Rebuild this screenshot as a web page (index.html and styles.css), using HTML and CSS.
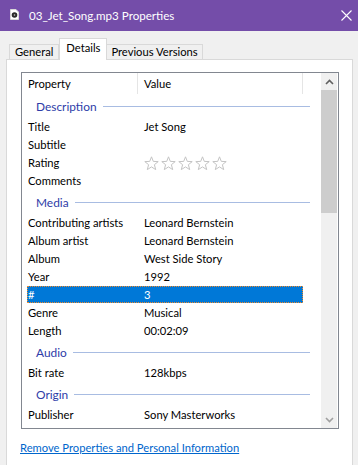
FILE: index.html
```html
<!DOCTYPE html>
<html lang="en">
<head>
  <meta charset="UTF-8" />
  <title>03_Jet_Song.mp3 Properties</title>
  <link rel="stylesheet" href="styles.css">
</head>
<body>
  <header class="titlebar">
    <svg class="file-icon" width="9" height="11" viewBox="0 0 9 11">
      <path d="M0.5 0.5 H6 L8.5 3 V10.5 H0.5 Z" fill="#fff" stroke="#d8d8d8" />
      <circle cx="4.5" cy="6" r="2.8" fill="#2a2a2a" />
      <circle cx="4.5" cy="6" r="0.8" fill="#c8c8c8" />
    </svg>
    <div class="title-text">03_Jet_Song.mp3 Properties</div>
    <svg class="close-icon" width="11" height="11" viewBox="0 0 11 11">
      <path d="M0.5 0.5 L10.5 10.5 M10.5 0.5 L0.5 10.5" stroke="#fff" stroke-width="1.1" />
    </svg>
  </header>

  <nav class="tabs">
    <div class="tab">General</div>
    <div class="tab active">Details</div>
    <div class="tab">Previous Versions</div>
  </nav>

  <main class="panel">
    <div class="listbox">
      <div class="list-content">
        <div class="list-header">
          <div class="col-head first">Property</div>
          <div class="col-head second">Value</div>
        </div>

        <div class="group"><span>Description</span><i></i></div>
        <div class="row"><span>Title</span><span>Jet Song</span></div>
        <div class="row"><span>Subtitle</span><span></span></div>
        <div class="row"><span>Rating</span>
          <span class="stars">
            <svg width="84" height="15" viewBox="0 0 84 15">
              <g fill="none" stroke="#c4c4c4" stroke-width="1">
                <path id="star" d="M7.5 0.8 L9.3 5.4 L14.2 5.6 L10.4 8.7 L11.7 13.6 L7.5 10.9 L3.3 13.6 L4.6 8.7 L0.8 5.6 L5.7 5.4 Z" />
                <use href="#star" x="17" />
                <use href="#star" x="34" />
                <use href="#star" x="51" />
                <use href="#star" x="68" />
              </g>
            </svg>
          </span>
        </div>
        <div class="row"><span>Comments</span><span></span></div>

        <div class="group"><span>Media</span><i></i></div>
        <div class="row"><span>Contributing artists</span><span>Leonard Bernstein</span></div>
        <div class="row"><span>Album artist</span><span>Leonard Bernstein</span></div>
        <div class="row"><span>Album</span><span>West Side Story</span></div>
        <div class="row"><span>Year</span><span>1992</span></div>
        <div class="row selected"><span>#</span><span>3</span></div>
        <div class="row"><span>Genre</span><span>Musical</span></div>
        <div class="row"><span>Length</span><span>00:02:09</span></div>

        <div class="group"><span>Audio</span><i></i></div>
        <div class="row"><span>Bit rate</span><span>128kbps</span></div>

        <div class="group"><span>Origin</span><i></i></div>
        <div class="row"><span>Publisher</span><span>Sony Masterworks</span></div>
      </div>

      <div class="scrollbar">
        <div class="sb-btn">
          <svg width="9" height="6" viewBox="0 0 9 6"><path d="M1 5 L4.5 1.5 L8 5" fill="none" stroke="#606060" stroke-width="1.6" /></svg>
        </div>
        <div class="sb-thumb"></div>
        <div class="sb-track"></div>
        <div class="sb-btn">
          <svg width="9" height="6" viewBox="0 0 9 6"><path d="M1 1 L4.5 4.5 L8 1" fill="none" stroke="#a0a0a0" stroke-width="1.6" /></svg>
        </div>
      </div>
    </div>

    <a class="remove-link" href="#">Remove Properties and Personal Information</a>
  </main>
</body>
</html>
```

FILE: styles.css
```css
* {
  box-sizing: border-box;
  margin: 0;
  padding: 0;
}

body {
  font-family: 'Segoe UI', Lato, 'Liberation Sans', sans-serif;
  font-size: 11.2px;
  background: #f0f0f0;
  color: #000;
  overflow: hidden;
  height: 465px;
}

.titlebar {
  height: 31px;
  background-color: #744da9;
  color: white;
  display: flex;
  align-items: center;
  padding-left: 10px;
}

.file-icon {
  margin-top: -2px;
}

.title-text {
  margin-left: 10px;
  font-size: 11.6px;
  flex: 1;
}

.close-icon {
  margin-right: 6px;
}

.tabs {
  display: flex;
  align-items: flex-start;
  height: 22px;
  margin-top: 7px;
  margin-bottom: -1px;
  padding-left: 9px;
  position: relative;
  z-index: 1;
}

.tab {
  margin-top: 6px;
  height: 15px;
  line-height: 13px;
  padding: 0 5px;
  border: 1px solid #d9d9d9;
  border-bottom: none;
  background: #f0f0f0;
}

.tab + .tab {
  border-left: none;
}

.tab.active {
  margin-top: 0;
  height: 22px;
  line-height: 18px;
  padding: 0 6px;
  background: #fff;
  border-left: 1px solid #d9d9d9;
}

.tab.active + .tab {
  border-left: 1px solid #d9d9d9;
  margin-left: -1px;
  padding: 0 4px;
}

.panel {
  margin: 0 5px 0 6px;
  height: 420px;
  background: #fff;
  border: 1px solid #d9d9d9;
  padding: 12px 0 0 13px;
}

.listbox {
  margin-left: 1px;
  width: 318px;
  height: 357px;
  border: 1px solid #828790;
  display: flex;
  padding-right: 1px;
}

.list-content {
  width: 299px;
}

.list-header {
  display: flex;
  height: 21px;
}

.col-head {
  padding: 4px 0 0 6px;
  border-right: 1px solid #e5e5e5;
}

.col-head.first {
  width: 116px;
}

.col-head.second {
  width: 165px;
}

.group {
  display: flex;
  align-items: center;
  height: 24px;
  padding: 1px 10px 0 14px;
  color: #2e3ca8;
  font-size: 11.9px;
}

.group i {
  flex: 1;
  height: 1px;
  margin-left: 6px;
  background: #a8bce2;
}

.row {
  display: grid;
  grid-template-columns: 116px 1fr;
  height: 18px;
  line-height: 18px;
  width: 276px;
  margin-left: 5px;
  padding-left: 1px;
}

.row.selected {
  height: 17px;
  line-height: 15px;
  margin-bottom: 1px;
  padding-left: 0;
  background: #0078d7;
  color: #fff;
  border: 1px dotted #f08a2c;
}

.stars svg {
  display: block;
  margin-top: 2px;
}

.scrollbar {
  width: 16px;
  margin-left: 1px;
  display: flex;
  flex-direction: column;
  background: #f0f0f0;
}

.sb-btn {
  height: 17px;
  display: flex;
  align-items: center;
  justify-content: center;
}

.sb-thumb {
  height: 123px;
  background: #cdcdcd;
}

.sb-track {
  flex: 1;
}

.remove-link {
  display: block;
  margin-top: 11px;
  line-height: 15px;
  color: #0066cc;
  text-decoration: underline;
}
```
